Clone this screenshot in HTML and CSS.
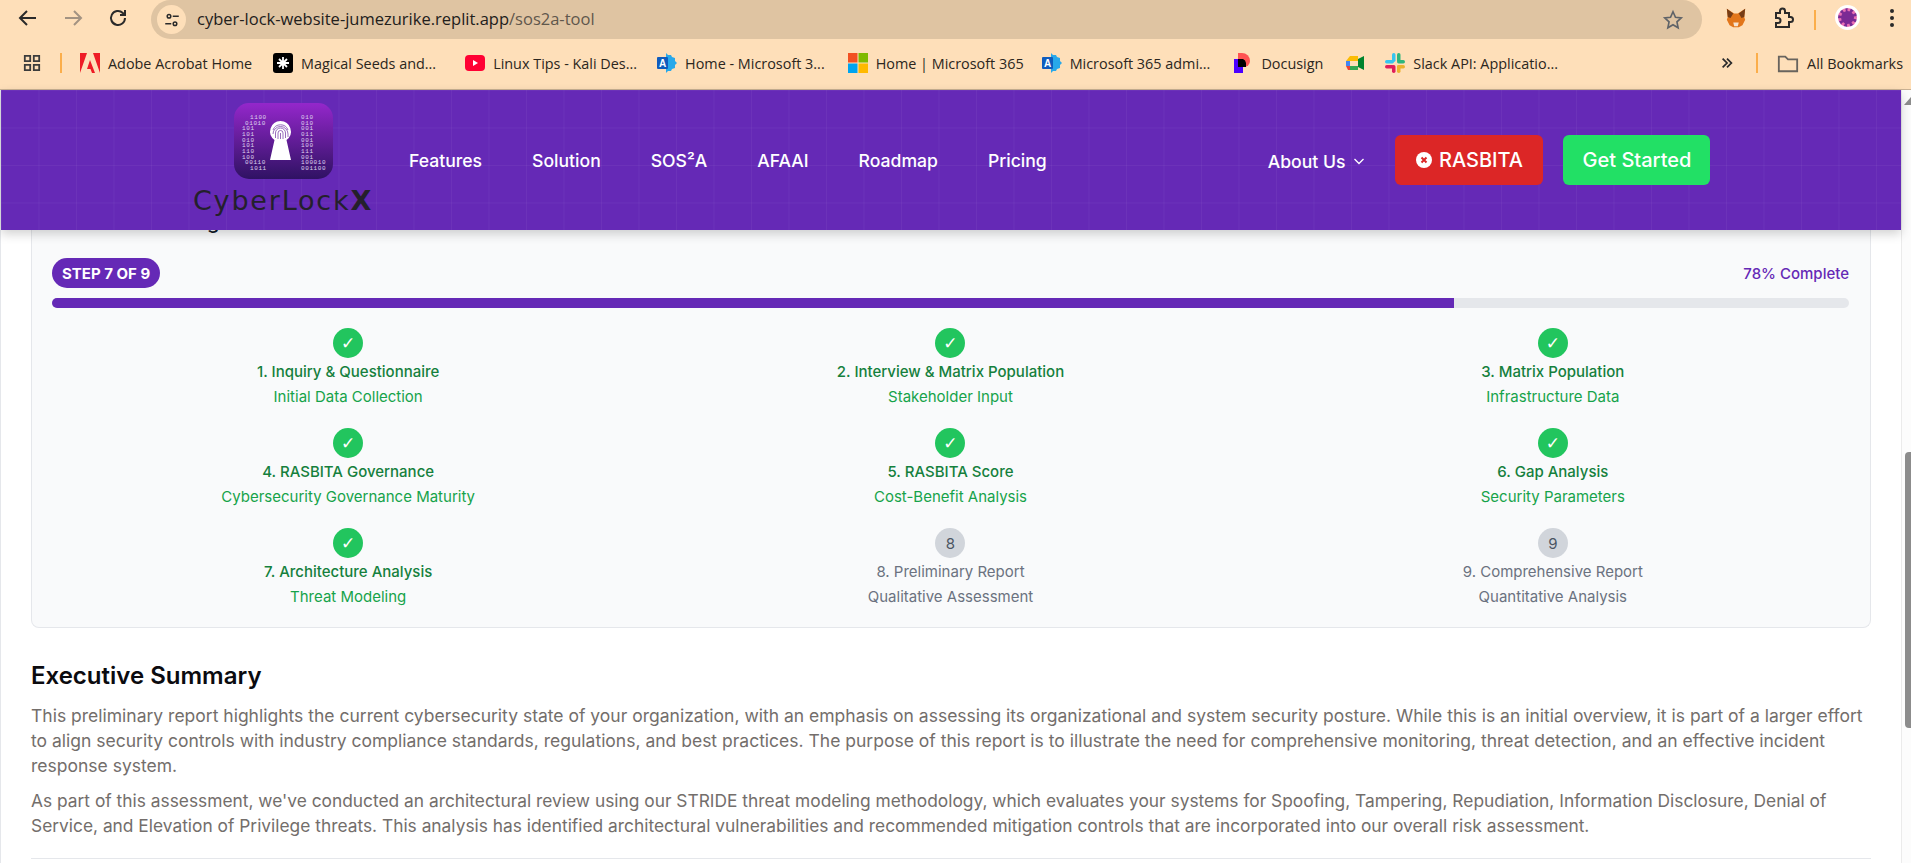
FILE: index.html
```html
<!DOCTYPE html>
<html lang="en">
<head>
    <meta charset="UTF-8">
    <meta name="viewport" content="width=device-width, initial-scale=1.0">
    <title>CyberLockX SOS2A Tool</title>
    <link rel="stylesheet" href="styles.css">
</head>
<body>
    <div class="toolbar">
        <svg class="tool-icon" viewBox="0 0 24 24"><path d="M20 12H5M11 5l-7 7 7 7"/></svg>
        <svg class="tool-icon tool-off" viewBox="0 0 24 24"><path d="M4 12h15M13 5l7 7-7 7"/></svg>
        <svg class="tool-icon" viewBox="0 0 24 24"><path d="M19 12a7 7 0 1 1-2.2-5.1L19 9M19 4v5h-5"/></svg>
        <div class="omnibox">
            <span class="site-icon">
                <svg viewBox="0 0 24 24"><circle cx="8" cy="7" r="2.4"/><path d="M13 7h8M3 17h8"/><circle cx="16" cy="17" r="2.4"/></svg>
            </span>
            <span class="url">cyber-lock-website-jumezurike.replit.app<span class="url-path">/sos2a-tool</span></span>
            <svg class="star" viewBox="0 0 24 24"><path d="M12 3l2.700 6 6.300.7-4.700 4.300 1.300 6.500-5.600-3.300-5.600 3.300 1.300-6.500L3 9.700 9.300 9z"/></svg>
        </div>
        <div class="toolbar-right">
            <svg class="ext-fox" viewBox="0 0 24 24">
                <path fill="#e2761b" d="M2 2l8 5h4l8-5-1 9 1 3-3 6-4 2h-6l-4-2-3-6 1-3z"/>
                <path fill="#763d16" d="M2 2l7 5-3 5-3-1zM22 2l-7 5 3 5 3-1z"/>
                <path fill="#f6e3d0" d="M9 17h6l-1 4h-4z"/>
            </svg>
            <svg class="tool-icon puzzle" viewBox="0 0 24 24"><path d="M5 7h4V5a2.500 2.500 0 0 1 5 0v2h4v4h1.500a2.500 2.500 0 0 1 0 5H18v5H5v-4h2a2 2 0 0 0 0-5H5z"/></svg>
            <span class="bar-sep"></span>
            <span class="avatar"><span class="avatar-dot"></span></span>
            <span class="kebab"><i></i><i></i><i></i></span>
        </div>
    </div>

    <div class="bookmarks">
        <svg class="apps" viewBox="0 0 20 20"><path d="M2 2h6v6H2zM12 2h6v6h-6zM2 12h6v6H2zM12 12h6v6h-6z"/></svg>
        <span class="bar-sep"></span>
        <a class="bm bm-adobe">
            <svg viewBox="0 0 20 20"><path fill="#ee1c25" d="M0 0h7L0 20zM13 0h7v20zM10 7l5 13h-3l-1.500-4H7z"/></svg>
            Adobe Acrobat Home
        </a>
        <a class="bm bm-seeds">
            <svg viewBox="0 0 20 20"><rect width="20" height="20" rx="3" fill="#000"/><path stroke="#fff" stroke-width="1.800" d="M10 4v12M4 10h12M6 6l8 8M14 6l-8 8"/></svg>
            Magical Seeds and...
        </a>
        <a class="bm bm-yt">
            <svg viewBox="0 0 20 20"><rect y="2" width="20" height="16" rx="4" fill="#ff0033"/><path fill="#fff" d="M8 7l5 3-5 3z"/></svg>
            Linux Tips - Kali Des...
        </a>
        <a class="bm bm-ms1">
            <svg viewBox="0 0 20 20"><path fill="#28a8ea" d="M9 0l2 2h3l1 2 3 1v3l2 2-2 2v3l-3 1-1 2h-3l-2 2z"/><rect y="4" width="11" height="12" rx="1" fill="#0f5cbd"/><text x="5.500" y="13.500" class="bm-letter">A</text></svg>
            Home - Microsoft 3...
        </a>
        <a class="bm bm-ms2">
            <svg viewBox="0 0 20 20"><path fill="#f25022" d="M0 0h9.500v9.500H0z"/><path fill="#7fba00" d="M10.500 0H20v9.500h-9.500z"/><path fill="#00a4ef" d="M0 10.500h9.500V20H0z"/><path fill="#ffb900" d="M10.500 10.500H20V20h-9.500z"/></svg>
            Home | Microsoft 365
        </a>
        <a class="bm bm-ms3">
            <svg viewBox="0 0 20 20"><path fill="#28a8ea" d="M9 0l2 2h3l1 2 3 1v3l2 2-2 2v3l-3 1-1 2h-3l-2 2z"/><rect y="4" width="11" height="12" rx="1" fill="#0f5cbd"/><text x="5.500" y="13.500" class="bm-letter">A</text></svg>
            Microsoft 365 admi...
        </a>
        <a class="bm bm-docu">
            <svg viewBox="0 0 20 20"><path fill="#ff5252" d="M5 0h4a8 8 0 0 1 8 8 6 6 0 0 1-6 6H5z"/><path fill="#4c00ff" d="M1 6h9v14H1z"/><path fill="#000" d="M5 6h5a5 5 0 0 1 3 4v4H5z"/></svg>
            Docusign
        </a>
        <a class="bm bm-meet">
            <svg viewBox="0 0 20 20"><path fill="#fbbc04" d="M5 3h8v5H1z"/><path fill="#4285f4" d="M1 8h4v5H1z"/><path fill="#34a853" d="M5 13h8v4H5z"/><path fill="#ea4335" d="M1 13h4v4H3z"/><path fill="#00832d" d="M13 6l6-3v14l-6-3z"/></svg>
        </a>
        <a class="bm bm-slack">
            <svg viewBox="0 0 20 20"><rect x="7" y="0" width="3.500" height="9" rx="1.700" fill="#36c5f0"/><rect x="0" y="7" width="9" height="3.500" rx="1.700" fill="#36c5f0"/><rect x="12" y="0" width="3.500" height="9" rx="1.700" fill="#2eb67d"/><rect x="12" y="7" width="8" height="3.500" rx="1.700" fill="#2eb67d"/><rect x="12" y="12" width="3.500" height="8" rx="1.700" fill="#ecb22e"/><rect x="12" y="12" width="8" height="3.500" rx="1.700" fill="#ecb22e"/><rect x="7" y="12" width="3.500" height="8" rx="1.700" fill="#e01e5a"/><rect x="0" y="12" width="9" height="3.500" rx="1.700" fill="#e01e5a"/></svg>
            Slack API: Applicatio...
        </a>
        <span class="more">
            <svg viewBox="0 0 16 16"><path d="M3 3l5 5-5 5M8 3l5 5-5 5"/></svg>
        </span>
        <span class="bar-sep"></span>
        <a class="bm bm-all">
            <svg viewBox="0 0 24 24"><path d="M2 5h7l3 3h10v13H2z"/></svg>
            All Bookmarks
        </a>
    </div>

    <div class="viewport">
        <div class="page">
            <header class="site-nav">
                <a class="logo">
                    <span class="logo-tile">
                        <svg viewBox="0 0 99 76">
                            <g class="logo-bits">
                                <text x="16" y="16">1100</text><text x="11" y="21.500">01010</text><text x="8" y="27">101</text><text x="8" y="33">101</text><text x="8" y="38.500">010</text><text x="8" y="44">101</text><text x="8" y="50">110</text><text x="8" y="55.500">100</text><text x="11" y="61">00110</text><text x="16" y="67">1011</text>
                                <text x="67" y="16">010</text><text x="67" y="21.500">010</text><text x="67" y="27">001</text><text x="67" y="33">011</text><text x="67" y="38.500">001</text><text x="67" y="44">100</text><text x="67" y="50">111</text><text x="67" y="55.500">001</text><text x="67" y="61">100010</text><text x="67" y="67">001100</text>
                            </g>
                            <path fill="#fff" d="M46.500 18a10.500 10.500 0 0 1 6 19l4.500 20H36l4.500-20a10.500 10.500 0 0 1 6-19z"/>
                            <g class="logo-print">
                                <path d="M39 27a8 8 0 0 1 15 0M39 31a7.500 7.500 0 0 1 15 0v3M41.500 35v-5a5 5 0 0 1 10 0v5M44 36v-6a2.500 2.500 0 0 1 5 0v6M46.500 30v6"/>
                            </g>
                        </svg>
                    </span>
                    <span class="logo-word">CyberLock<b>X</b></span>
                </a>
                <nav class="nav-links">
                    <a>Features</a>
                    <a>Solution</a>
                    <a>SOS²A</a>
                    <a>AFAAI</a>
                    <a>Roadmap</a>
                    <a>Pricing</a>
                </nav>
                <div class="nav-actions">
                    <a class="about">About Us
                        <svg viewBox="0 0 12 12"><path d="M1.500 4l4.500 4.500L10.500 4"/></svg>
                    </a>
                    <a class="btn btn-red">
                        <svg viewBox="0 0 16 16"><circle cx="8" cy="8" r="8" fill="#fff"/><path stroke="#dc2626" stroke-width="2" d="M5.500 5.500l5 5M10.500 5.500l-5 5"/></svg>
                        RASBITA
                    </a>
                    <a class="btn btn-green">Get Started</a>
                </div>
            </header>

            <main class="report">
                <section class="progress-card">
                    <h2 class="card-title">Assessment Progress</h2>
                    <div class="progress-head">
                        <span class="step-pill">STEP 7 OF 9</span>
                        <span class="percent">78% Complete</span>
                    </div>
                    <div class="track"><div class="fill" style="width: 78%"></div></div>
                    <div class="steps">
                        <div class="step done"><span class="dot">✓</span><div class="step-name">1. Inquiry &amp; Questionnaire</div><div class="step-sub">Initial Data Collection</div></div>
                        <div class="step done"><span class="dot">✓</span><div class="step-name">2. Interview &amp; Matrix Population</div><div class="step-sub">Stakeholder Input</div></div>
                        <div class="step done"><span class="dot">✓</span><div class="step-name">3. Matrix Population</div><div class="step-sub">Infrastructure Data</div></div>
                        <div class="step done"><span class="dot">✓</span><div class="step-name">4. RASBITA Governance</div><div class="step-sub">Cybersecurity Governance Maturity</div></div>
                        <div class="step done"><span class="dot">✓</span><div class="step-name">5. RASBITA Score</div><div class="step-sub">Cost-Benefit Analysis</div></div>
                        <div class="step done"><span class="dot">✓</span><div class="step-name">6. Gap Analysis</div><div class="step-sub">Security Parameters</div></div>
                        <div class="step done"><span class="dot">✓</span><div class="step-name">7. Architecture Analysis</div><div class="step-sub">Threat Modeling</div></div>
                        <div class="step"><span class="dot">8</span><div class="step-name">8. Preliminary Report</div><div class="step-sub">Qualitative Assessment</div></div>
                        <div class="step"><span class="dot">9</span><div class="step-name">9. Comprehensive Report</div><div class="step-sub">Quantitative Analysis</div></div>
                    </div>
                </section>

                <section class="summary">
                    <h2>Executive Summary</h2>
                    <p class="para-first">This preliminary report highlights the current cybersecurity state of your organization, with an emphasis on assessing its organizational and system security posture. While this is an initial overview, it is part of a larger effort to align security controls with industry compliance standards, regulations, and best practices. The purpose of this report is to illustrate the need for comprehensive monitoring, threat detection, and an effective incident response system.</p>
                    <p class="para-second">As part of this assessment, we've conducted an architectural review using our STRIDE threat modeling methodology, which evaluates your systems for Spoofing, Tampering, Repudiation, Information Disclosure, Denial of Service, and Elevation of Privilege threats. This analysis has identified architectural vulnerabilities and recommended mitigation controls that are incorporated into our overall risk assessment.</p>
                    <hr class="rule">
                </section>
            </main>
        </div>
        <div class="scrollbar"><span class="scroll-up"></span><span class="scroll-thumb"></span></div>
    </div>
</body>
</html>
```

FILE: styles.css
```css
* {
    box-sizing: border-box;
}

html, body {
    height: 100%;
    margin: 0;
    overflow: hidden;
}

body {
    display: flex;
    flex-direction: column;
    background-color: white;
    font-family: Inter, "Noto Sans", sans-serif;
}

/* browser chrome */
.toolbar {
    height: 45px;
    padding: 0 0 6px 16px;
    display: flex;
    align-items: center;
    background-color: #fedfb9;
}

.tool-icon {
    width: 24px;
    height: 24px;
    margin-right: 21px;
    margin-top: -4px;
    fill: none;
    stroke: #2a2a2a;
    stroke-width: 2;
    flex-shrink: 0;
}

.tool-off {
    stroke: #a39382;
}

.omnibox {
    width: 1551px;
    height: 39px;
    padding: 0 18px 0 6px;
    display: flex;
    align-items: center;
    background-color: #dfc4a2;
    border-radius: 20px;
}

.site-icon {
    width: 29px;
    height: 29px;
    margin-right: 11px;
    display: flex;
    align-items: center;
    justify-content: center;
    background-color: #fedfb9;
    border-radius: 50%;
}

.site-icon svg {
    width: 18px;
    height: 18px;
    fill: none;
    stroke: #2a2a2a;
    stroke-width: 2;
}

.url {
    flex: 1;
    margin-top: -2px;
    font-family: "Open Sans", sans-serif;
    font-size: 16.5px;
    color: #22201c;
}

.url-path {
    color: #5f574c;
}

.star {
    width: 22px;
    height: 22px;
    fill: none;
    stroke: #5f6368;
    stroke-width: 1.8;
}

.toolbar-right {
    margin-left: 23px;
    display: flex;
    align-items: center;
}

.ext-fox {
    width: 22px;
    height: 22px;
    margin-right: 24px;
    margin-top: -4px;
}

.puzzle {
    margin-right: 19px;
}

.bar-sep {
    width: 2px;
    height: 20px;
    background-color: #fbae4b;
    flex-shrink: 0;
}

.avatar {
    width: 25px;
    height: 25px;
    margin-left: 19px;
    margin-top: -4px;
    display: flex;
    align-items: center;
    justify-content: center;
    background-color: white;
    border-radius: 50%;
}

.avatar-dot {
    width: 19px;
    height: 19px;
    background-color: #7b2a94;
    border: 3px dotted #e86fb4;
    border-radius: 50%;
}

.kebab {
    margin-left: 30px;
    margin-top: -4px;
    display: flex;
    flex-direction: column;
    gap: 3px;
}

.kebab i {
    width: 4px;
    height: 4px;
    background-color: #2a2a2a;
    border-radius: 50%;
}

.bookmarks {
    height: 45px;
    padding: 0 8px 8px 23px;
    display: flex;
    align-items: center;
    background-color: #fedfb9;
    border-bottom: 1px solid #c9b193;
    font-family: "Open Sans", sans-serif;
    font-size: 14.4px;
    color: #2b2620;
    white-space: nowrap;
}

.apps {
    width: 18px;
    height: 18px;
    margin-right: 19px;
    fill: none;
    stroke: #3c3c3c;
    stroke-width: 2;
}

.bm {
    display: flex;
    align-items: center;
    gap: 8px;
}

.bm svg {
    width: 20px;
    height: 20px;
    flex-shrink: 0;
}

.bm-letter {
    font-family: "Liberation Sans", sans-serif;
    font-size: 10px;
    font-weight: bold;
    fill: white;
    text-anchor: middle;
}

.bm-adobe { margin-left: 18px; }
.bm-seeds { margin-left: 21px; }
.bm-yt { margin-left: 29px; }
.bm-ms1 { margin-left: 20px; }
.bm-ms2 { margin-left: 23px; }
.bm-ms3 { margin-left: 18px; }
.bm-docu { margin-left: 23px; }
.bm-meet { margin-left: 22px; }
.bm-slack { margin-left: 20px; }

.more {
    margin-left: auto;
    margin-right: 22px;
    display: flex;
}

.more svg {
    width: 14px;
    height: 14px;
    fill: none;
    stroke: #2a2a2a;
    stroke-width: 2;
}

.bm-all {
    margin-left: 19px;
}

.bm-all svg {
    width: 22px;
    height: 22px;
    fill: none;
    stroke: #68645e;
    stroke-width: 2;
}

/* page inside the browser */
.viewport {
    flex: 1;
    display: flex;
    min-height: 0;
}

.page {
    flex: 1;
    min-width: 0;
    border-left: 1px solid #e5e7eb;
}

.site-nav {
    position: relative;
    z-index: 2;
    height: 140px;
    padding-left: 192px;
    display: flex;
    background-color: #6529b6;
    background-image:
        linear-gradient(rgba(255, 255, 255, 0.045) 1px, transparent 1px),
        linear-gradient(90deg, rgba(255, 255, 255, 0.045) 1px, transparent 1px);
    background-size: 37.5px 37.5px;
    box-shadow: 0 4px 10px rgba(0, 0, 0, 0.18);
    color: white;
}

.logo {
    width: 180px;
    padding-top: 13px;
    display: flex;
    flex-direction: column;
    align-items: center;
    flex-shrink: 0;
}

.logo-tile {
    width: 99px;
    height: 76px;
    display: block;
    background: linear-gradient(#9427cb, #2f1263);
    border-radius: 15px;
    overflow: hidden;
}

.logo-tile svg {
    display: block;
    width: 100%;
    height: 100%;
}

.logo-bits text {
    font-family: "Liberation Mono", monospace;
    font-size: 6px;
    letter-spacing: 0.6px;
    fill: #ddd2ee;
}

.logo-print path {
    fill: none;
    stroke: #8d5db5;
    stroke-width: 0.9;
}

.logo-word {
    margin-top: 6px;
    font-family: "DejaVu Sans", sans-serif;
    font-size: 27px;
    line-height: 31px;
    letter-spacing: 1.8px;
    color: #24202c;
}

.logo-word b {
    font-weight: 700;
}

.nav-links {
    margin-left: 36px;
    display: flex;
    align-items: center;
    gap: 50px;
    font-size: 17.6px;
    font-weight: 500;
}

.nav-actions {
    margin-left: 221px;
    display: flex;
    align-items: center;
}

.about {
    margin-right: 30px;
    padding-top: 2px;
    display: flex;
    align-items: center;
    gap: 8px;
    font-size: 17.6px;
    font-weight: 500;
}

.about svg {
    width: 12px;
    height: 12px;
    fill: none;
    stroke: white;
    stroke-width: 1.3;
}

.btn {
    height: 50px;
    display: flex;
    align-items: center;
    justify-content: center;
    border-radius: 6px;
    font-size: 20px;
    font-weight: 500;
}

.btn svg {
    width: 16px;
    height: 16px;
}

.btn-red {
    width: 148px;
    gap: 7px;
    background-color: #dc2626;
}

.btn-green {
    width: 147px;
    margin-left: 20px;
    background-color: #22e065;
}

.report {
    padding: 0 30px;
}

.progress-card {
    display: flow-root;
    height: 402px;
    margin-top: -4px;
    padding: 0 21px 0 20px;
    background-color: #f9fafb;
    border: 1px solid #e5e7eb;
    border-top: none;
    border-radius: 0 0 8px 8px;
}

/* only the descender of this heading shows under the nav */
.card-title {
    height: 24px;
    margin: -16px 0 24px;
    font-size: 20px;
    line-height: 24px;
    font-weight: 500;
    color: #111827;
}

.progress-head {
    display: flex;
    justify-content: space-between;
    align-items: center;
}

.step-pill {
    height: 30px;
    padding: 0 10px;
    display: flex;
    align-items: center;
    background-color: #6529b6;
    border-radius: 15px;
    font-size: 15px;
    font-weight: 700;
    color: white;
}

.percent {
    font-size: 15px;
    font-weight: 500;
    color: #6529b6;
}

.track {
    height: 10px;
    margin-top: 10px;
    background-color: #e5e7eb;
    border-radius: 5px;
    overflow: hidden;
}

.fill {
    height: 100%;
    background-color: #6529b6;
}

.steps {
    margin-top: 20px;
    display: grid;
    grid-template-columns: repeat(3, 1fr);
    column-gap: 10px;
    row-gap: 16px;
}

.step {
    height: 84px;
    display: flex;
    flex-direction: column;
    align-items: center;
    text-align: center;
}

.dot {
    width: 30px;
    height: 30px;
    margin-bottom: 4px;
    display: flex;
    align-items: center;
    justify-content: center;
    background-color: #d1d5db;
    border-radius: 50%;
    font-size: 15px;
    color: #4b5563;
}

.step-name {
    font-size: 15px;
    line-height: 20px;
    font-weight: 400;
    color: #6b7280;
}

.step-sub {
    margin-top: 5px;
    font-size: 15px;
    line-height: 20px;
    color: #6b7280;
}

.step.done .dot {
    background-color: #22c55e;
    font-family: "DejaVu Sans", sans-serif;
    font-size: 17px;
    color: white;
}

.step.done .step-name {
    font-weight: 500;
    color: #15803d;
}

.step.done .step-sub {
    color: #16a34a;
}

.summary {
    padding-top: 32px;
}

.summary h2 {
    margin: 0 0 11px;
    font-size: 24px;
    line-height: 32px;
    font-weight: 600;
    color: #0b0b0f;
}

.summary p {
    margin: 0 0 10px;
    line-height: 25px;
    color: #736e6b;
}

.para-first {
    font-size: 17.5px;
}

.para-second {
    font-size: 17.35px;
}

.rule {
    margin: 20px 0 0;
    border: none;
    border-top: 1px solid #e5e7eb;
}

.scrollbar {
    width: 10px;
    display: flex;
    flex-direction: column;
    background-color: #fcfcfc;
    box-shadow: inset 1px 0 0 #ebebeb;
    overflow: hidden;
    flex-shrink: 0;
}

.scroll-up {
    width: 0;
    height: 0;
    margin: 7px 0 0 3px;
    border-left: 7px solid transparent;
    border-right: 7px solid transparent;
    border-bottom: 8px solid #8c8c8c;
}

.scroll-thumb {
    width: 10px;
    height: 276px;
    margin: 347px 0 0 4px;
    background-color: #8c8c8c;
    border-radius: 4px;
    flex-shrink: 0;
}
```
